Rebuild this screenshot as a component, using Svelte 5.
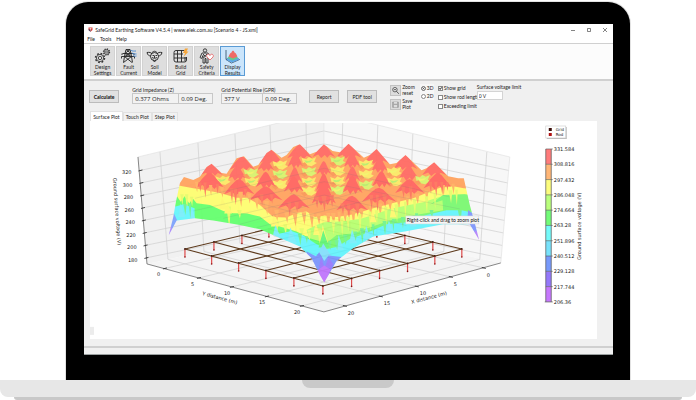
<script>
  const tools = [
    ['Design', 'Settings', 'gears'],
    ['Fault', 'Current', 'tower'],
    ['Soil', 'Model', 'soil'],
    ['Build', 'Grid', 'grid'],
    ['Safety', 'Criteria', 'safety'],
    ['Display', 'Results', 'results']
  ];
  let activeTool = $state('results');
  let activeTab = $state('Surface Plot');
  let view = $state('3D');

  const zTicks = [320, 300, 280, 260, 240, 220, 200, 180].map((value, i) => ({
    value,
    x: 140 + i * 0.85,
    y: 170.5 + i * 12.5,
    back: 131 + i * 12.9,
    right: 509 - i * 1.1
  }));

  // Floor grid lines: tick on the front edge, foot of the wall, top of the wall
  const xLines = [
    { label: 20, tick: [345, 306], foot: [168, 259.5], top: [160, 152] },
    { label: 15, tick: [381, 296.5], foot: [204, 251.5], top: [198, 143] },
    { label: 10, tick: [417, 286.5], foot: [240, 243.5], top: [235, 134] },
    { label: 5, tick: [451, 277], foot: [274, 236], top: [270, 125] },
    { label: 0, tick: [484, 268], foot: [308, 228.5], top: [306, 117] }
  ];
  const yLines = [
    { label: 0, tick: [165, 268.5], foot: [340, 228.5], top: [343, 117] },
    { label: 5, tick: [199, 278], foot: [374, 236], top: [378, 125] },
    { label: 10, tick: [232, 287], foot: [409, 243.5], top: [413, 134] },
    { label: 15, tick: [267, 296.5], foot: [444, 251.5], top: [449, 143] },
    { label: 20, tick: [302, 306], foot: [480, 259.5], top: [487, 152] }
  ];

  // Buried conductors run between matching nodes on opposite edges
  const frontLeft = [[185, 249], [211.7, 256], [238.7, 263], [266, 270.5], [294, 278], [323, 286]];
  const backRight = [[323, 216], [350, 222.5], [377, 229], [405, 235.5], [433, 242], [462, 249]];
  const frontRight = [[323, 286], [351.7, 278.5], [379.7, 270.5], [407.7, 263.5], [435, 256], [462, 249]];
  const backLeft = [[185, 249], [214, 242], [242, 235.5], [269, 229], [296, 222.5], [323, 216]];
  const rods = [...frontLeft, ...frontRight.slice(1), ...backLeft.slice(1), ...backRight.slice(1, 5)];

  const scale = [
    ['331.584', '#ff7b7b'], ['308.816', '#ffb676'], ['297.432', '#fcfc7c'], ['286.048', '#baff7c'],
    ['274.664', '#72fb78'], ['263.28', '#74fafa'], ['251.896', '#78e2fb'], ['240.512', '#7799fb'],
    ['229.128', '#9478fa'], ['217.744', '#c678fd']
  ];

  // Crests of the surface: apex x, apex y, half width, height
  const backCrests = [
    [155, 86, 34, 34], [247, 64, 38, 40], [333, 44, 38, 42], [420, 28, 38, 42], [492, 28, 34, 38],
    [567, 26, 38, 42], [650, 42, 36, 42], [737, 60, 36, 42], [823, 82, 36, 38],
    [232, 92, 30, 42], [318, 72, 26, 34], [407, 52, 24, 44], [492, 78, 22, 40], [577, 52, 25, 44],
    [660, 68, 26, 42], [747, 92, 32, 42], [405, 96, 22, 46], [578, 94, 23, 44]
  ];
  const frontCrests = [
    [492, 114, 24, 54], [665, 108, 28, 46], [318, 110, 30, 46], [150, 113, 44, 46], [238, 132, 46, 46],
    [402, 124, 30, 46], [578, 122, 30, 52], [750, 132, 44, 42], [835, 114, 44, 46],
    [492, 140, 36, 66], [318, 154, 50, 42], [402, 178, 48, 42], [577, 182, 48, 44], [658, 158, 52, 42]
  ];
  const crest = ([x, y, w, h]) =>
    `M${x - w} ${y + h}L${x - w * 0.55} ${y + h * 0.42}L${x - w * 0.2} ${y + h * 0.08}L${x} ${y}L${x + w * 0.22} ${y + h * 0.14}L${x + w * 0.6} ${y + h * 0.58}L${x + w} ${y + h}L${x + w * 0.55} ${y + h * 0.82}L${x + w * 0.3} ${y + h * 1.06}L${x + w * 0.08} ${y + h * 0.84}L${x - w * 0.24} ${y + h * 1.08}L${x - w * 0.5} ${y + h * 0.8}Z`;

  const hollows = [
    [190, 130], [275, 108], [278, 134], [362, 84], [362, 112], [362, 142], [449, 74], [449, 104],
    [449, 134], [449, 162], [535, 72], [535, 102], [535, 132], [535, 160], [620, 82], [620, 112],
    [620, 144], [704, 104], [706, 134], [790, 128]
  ];

  // Facets that cross a band edge: x, top, bottom, half width
  const spike = ([x, a, b, w]) => `M${x - w} ${a}L${x + w} ${a}L${x + w * 0.3} ${b}Z`;
  const rise = ([x, a, b, w]) => `M${x - w} ${b}L${x + w} ${b}L${x - w * 0.3} ${a}Z`;
  const redDown = [[120, 142, 170, 5], [135, 142, 188, 5], [172, 146, 176, 5], [215, 160, 202, 5], [226, 160, 210, 6], [256, 162, 186, 5], [305, 178, 212, 6], [335, 178, 206, 6], [388, 200, 244, 6], [410, 200, 232, 7], [470, 182, 220, 7], [492, 182, 230, 8], [515, 180, 216, 7], [548, 206, 240, 6], [566, 206, 256, 6], [592, 206, 246, 7], [634, 180, 224, 6], [652, 180, 232, 5], [674, 178, 218, 7], [730, 154, 190, 6], [752, 154, 200, 6], [812, 140, 176, 5], [828, 140, 184, 5], [846, 140, 180, 5], [862, 142, 168, 4]];
  const orangeDown = [[110, 140, 172, 5], [152, 150, 182, 5], [186, 155, 188, 6], [242, 170, 216, 7], [268, 176, 206, 6], [290, 190, 224, 6], [320, 198, 240, 7], [350, 225, 258, 7], [380, 232, 264, 7], [405, 232, 275, 8], [432, 232, 270, 7], [455, 234, 282, 7], [476, 236, 270, 7], [505, 234, 292, 6], [520, 234, 274, 7], [538, 230, 292, 5], [555, 228, 266, 7], [580, 226, 280, 6], [604, 222, 252, 7], [632, 210, 252, 6], [660, 206, 244, 7], [690, 196, 230, 7], [716, 190, 226, 6], [742, 184, 230, 5], [772, 176, 208, 7], [800, 166, 202, 6], [850, 150, 182, 6], [880, 146, 178, 5]];
  const yellowDown = [[66, 178, 212, 5], [80, 178, 225, 5], [95, 185, 215, 5], [206, 215, 280, 7], [238, 225, 250, 7], [350, 260, 290, 7], [376, 268, 300, 6], [425, 280, 310, 7], [448, 285, 322, 5], [478, 280, 330, 7], [520, 256, 300, 6], [546, 250, 305, 5], [564, 246, 290, 5], [600, 238, 300, 5], [630, 230, 290, 4], [650, 226, 268, 5], [678, 216, 280, 5], [710, 208, 262, 6], [736, 200, 250, 4], [764, 194, 240, 5], [800, 184, 235, 5], [825, 176, 222, 4], [872, 166, 205, 6], [890, 164, 210, 4]];
  const greenDown = [[75, 208, 240, 5], [90, 206, 252, 4], [420, 296, 332, 6], [440, 304, 326, 4], [510, 318, 345, 5], [530, 316, 345, 6], [556, 300, 330, 6], [586, 290, 318, 6], [606, 280, 325, 6], [640, 268, 305, 4], [674, 258, 300, 6], [700, 252, 290, 4], [728, 246, 280, 5], [770, 235, 262, 5], [815, 225, 250, 6], [900, 225, 262, 6]];
  const yellowUp = [[190, 186, 222, 12], [205, 206, 236, 12], [345, 240, 275, 12], [470, 262, 300, 10], [492, 270, 322, 12], [640, 220, 262, 10], [700, 206, 248, 10]];
  const cyanUp = [[65, 206, 246, 10], [98, 220, 252, 8], [350, 270, 306, 12], [396, 278, 326, 15], [540, 300, 345, 12], [580, 284, 325, 12], [622, 272, 312, 10], [690, 256, 290, 10], [760, 244, 275, 10]];
</script>

{#snippet icon(name)}
  <svg class="glyph" viewBox="0 0 32 32" aria-hidden="true">
    {#if name === 'gears'}
      <g fill="none" stroke="#333">
        <circle cx="11" cy="20" r="9" stroke-width="3" stroke-dasharray="3.5 3.57" />
        <circle cx="11" cy="20" r="7.2" stroke-width="1.7" />
        <circle cx="11" cy="20" r="3.4" stroke-width="1.7" />
        <circle cx="24" cy="8" r="6" stroke-width="2.6" stroke-dasharray="2.4 2.3" />
        <circle cx="24" cy="8" r="4.8" stroke-width="1.5" />
        <circle cx="24" cy="8" r="2" stroke-width="1.4" />
      </g>
    {:else if name === 'tower'}
      <path d="M11 3h8l2 8 3 18M11 3l-2 8-3 18M4 11h22M2 17h26M11 3l10 8M19 3L9 11M9 11l13 6M21 11L8 17M8 17l15 12M22 17L6 29M3 11v3M27 11v3M2 17v4M28 17v4" fill="none" stroke="#222" stroke-width="1.8" />
      <path d="M20 4c4 3 7 2 11 2M23 10c3 2 5 2 9 2M25 15c2 1 4 2 7 1" fill="none" stroke="#3f83d0" stroke-width="1.8" />
    {:else if name === 'soil'}
      <g fill="none" stroke="#2a2a2a" stroke-width="1.9">
        <circle cx="16" cy="17" r="8" />
        <path d="M1 9c5-1 8 0 10 3M31 9c-5-1-8 0-10 3M1 9c1 5 4 7 8 7M31 9c-1 5-4 7-8 7M10 11c3-6 9-6 12 0M11 19c3 2 7 2 10 0M13 24l3 4 3-4" />
        <path d="M12 15h3M18 15h3M16 15v5" />
      </g>
    {:else if name === 'grid'}
      <path d="M7 5h17M7 5q-4 0-4 4v15q0 4 4 4h17q4 0 4-4V18M3 12h18M3 20h25M10 5v23M18 5v23M25 18v9" fill="none" stroke="#2a2a2a" stroke-width="1.9" />
      <path d="M25 1h6l-3 6h4L22 18l3-8h-4z" fill="#f6a63a" />
    {:else if name === 'safety'}
      <g fill="none" stroke="#2a2a2a" stroke-width="1.8">
        <circle cx="13" cy="5" r="3.4" />
        <path d="M7 10h12l3 5M7 10l-4 9 3 2 3-6v15h4v-9h2v9h4V19M9 12l5 5M17 12l-7 8" />
      </g>
      <path d="M23 24l-6-6c-3-5 4-8 6-3 2-5 9-2 6 3z" fill="#fff" stroke="#e4696c" stroke-width="1.8" />
    {:else}
      <path d="M3 4v19l11 7 16-7M3 23l14-6 13 6" fill="none" stroke="#2c4660" stroke-width="1.6" />
      <path d="M4 24c3-4 5-8 9-8h8c4 1 6 4 9 7l-15 6z" fill="#5ea8e8" />
      <path d="M6 20c4-4 5-7 10-7s8 4 11 7l-11 5z" fill="#66c98d" />
      <path d="M8 17c2-3 3-8 6-8 1-5 5-5 6 0 3 0 4 5 6 8l-9 4z" fill="#ee6a66" />
    {/if}
  </svg>
{/snippet}

<main>
  <div class="lid">
    <div class="window">
      <header class="title">
        <svg class="logo" viewBox="0 0 10 10" aria-hidden="true">
          <path d="M1 1h8v5L5 9.500 1 6z" fill="#d8433f" /><path d="M1 5h4v4.500L1 6z" fill="#3c4a66" /><path d="M3 3h4M5 2v5" stroke="#fff" />
        </svg>
        <span class="caption">SafeGrid Earthing Software V4.5.4 | www.elek.com.au [Scenario 4 - JS.xml]</span>
        <span class="winbtns">
          <button aria-label="Minimise"><svg viewBox="0 0 6 6"><path d="M1 3.500h4" /></svg></button>
          <button aria-label="Maximise"><svg viewBox="0 0 6 6"><path d="M1.500 1.500h3v3h-3z" /></svg></button>
          <button aria-label="Close"><svg viewBox="0 0 6 6"><path d="M1 1l4 4M5 1L1 5" /></svg></button>
        </span>
      </header>

      <nav class="menu">
        <button>File</button><button>Tools</button><button>Help</button>
      </nav>

      <div class="toolbar">
        {#each tools as [first, second, name]}
          <button class="tool" class:active={activeTool === name} onclick={() => (activeTool = name)}>
            {@render icon(name)}
            <span>{first}<br />{second}</span>
          </button>
        {/each}
      </div>

      <section class="controls">
        <button class="push strong">Calculate</button>
        <div class="reading impedance">
          <label for="z">Grid Impedance (Z)</label>
          <div class="pair">
            <input id="z" readonly value="0.377 Ohms" />
            <input class="angle" aria-label="Impedance angle" readonly value="0.09 Deg." />
          </div>
        </div>
        <div class="reading gpr">
          <label for="gpr">Grid Potential Rise (GPR)</label>
          <div class="pair">
            <input id="gpr" readonly value="377 V" />
            <input class="angle" aria-label="Potential rise angle" readonly value="0.09 Deg." />
          </div>
        </div>
        <button class="push report">Report</button>
        <button class="push">PDF tool</button>
        <div class="actions">
          <button>
            <svg viewBox="0 0 11 11"><circle cx="4.800" cy="4.500" r="2.700" fill="#eee" stroke="#444" /><path d="M6.800 6.500l2.700 3M3.500 4.500h2.600" stroke="#333" /></svg>
            <span>Zoom<br />reset</span>
          </button>
          <button>
            <svg viewBox="0 0 11 11"><path d="M2 2.500h7v6.500H2z" fill="#aaa" stroke="#888" stroke-width=".6" /><path d="M3.500 2.500h4v2h-4zM3.500 6h4v3h-4z" fill="#ddd" /></svg>
            <span>Save<br />Plot</span>
          </button>
        </div>
        <div class="views">
          <label><input type="radio" name="view" value="3D" bind:group={view} />3D</label>
          <label><input type="radio" name="view" value="2D" bind:group={view} />2D</label>
        </div>
        <div class="checks">
          <label><input type="checkbox" checked />Show grid</label>
          <label><input type="checkbox" />Show rod length</label>
          <label><input type="checkbox" />Exceeding limit</label>
        </div>
        <div class="limit">
          <label for="limit">Surface voltage limit</label>
          <input id="limit" value="0 V" />
        </div>
      </section>

      <div class="tabs" role="tablist">
        {#each ['Surface Plot', 'Touch Plot', 'Step Plot'] as tab}
          <button role="tab" aria-selected={activeTab === tab} onclick={() => (activeTab = tab)}>{tab}</button>
        {/each}
      </div>

      <div class="panel">
        <svg class="plot" viewBox="90 121 507 218" role="img" aria-label="Ground surface voltage over the grid">
          <defs>
            <clipPath id="area"><rect x="90" y="123" width="507" height="216" /></clipPath>
            <clipPath id="sheet">
              <path d="M26 302L40 246L48 200L60 144L72 126L100 135L120 125L140 96L155 86L185 114L200 116L230 70L252 64L280 95L295 90L320 54L335 44L365 68L380 60L400 36L420 28L450 58L470 50L492 28L518 48L540 52L566 26L612 68L630 60L650 42L690 88L710 84L737 60L785 106L800 100L823 82L865 124L895 130L912 130L930 210L945 265L958 315L930 268L850 268L735 290L640 305L580 340L530 378L493 443L480 420L455 370L420 335L350 305L300 283L240 270L160 257L105 250L50 257Z" />
            </clipPath>
          </defs>

          <g clip-path="url(#area)">
            <path d="M138 157L324 112V225L147 264Z" fill="#f1f1f1" />
            <path d="M510 157L324 112V225L501 263Z" fill="#f7f7f7" />
            <path d="M147 264L324 225L501 263L324 312Z" fill="#f4f4f4" />
            <g fill="none" stroke="#cfcfcf" stroke-width=".7">
              {#each [...xLines, ...yLines] as l}
                <path d="M{l.tick}L{l.foot}L{l.top}" />
              {/each}
              {#each zTicks as t}
                <path d="M{t.x} {t.y}L324 {t.back}L{t.right} {t.y}" />
              {/each}
              <path d="M138 157L324 112L510 157L501 263M324 112V225" stroke="#e2e2e2" />
            </g>
          </g>

          <path d="M138 157L147 264L324 312L501 263" fill="none" stroke="#555" stroke-width=".7" />
          <g stroke="#333" stroke-width=".9">
            {#each zTicks as t}<path d="M{t.x - 1.5} {t.y + 0.5}l4-1" />{/each}
            {#each xLines as l}<path d="M{l.tick[0] - 2} {l.tick[1] - 0.5}l4 1" />{/each}
            {#each yLines as l}<path d="M{l.tick[0] - 2} {l.tick[1] + 0.5}l4-1" />{/each}
          </g>

          <g stroke="#5d3a1c" stroke-width="1.1">
            {#each frontLeft as p, i}<path d="M{p}L{backRight[i]}" />{/each}
            {#each frontRight as p, i}<path d="M{p}L{backLeft[i]}" />{/each}
          </g>
          {#each rods as [x, y]}
            <path d="M{x} {y}v8" stroke="#dd4a4a" stroke-width="1.200" />
            <circle cx={x} cy={y} r=".9" fill="#3a1c10" />
            <circle cx={x} cy={y + 8} r=".8" fill="#8a1414" />
          {/each}

          <g transform="translate(160 135) scale(.33333)">
            <g clip-path="url(#sheet)" opacity=".96">
              <path d="M20 20H970V450H20Z" fill="#ffa460" />
              {#each backCrests as c}<path d={crest(c)} fill="#ff6c64" />{/each}
              {#each hollows as [x, y], i}
                <path d="M{x - 24} {y - 6}l14 5 8-7 10 5 12-5-6 14 8 4-16 10-14-3-9 4z" fill={i % 3 === 1 ? '#d9f26e' : '#fbe968'} />
                <path d="M{x - 16} {y + 2}l12 2 14-4-8 8-12 2z" fill={i % 2 ? '#f2f56c' : '#b9ee6e'} />
                <path d="M{x - 26} {y + 12}l12-4 8 9-10 6z" fill="#f99a58" />
              {/each}
              {#each frontCrests as c}<path d={crest(c)} fill="#ff6660" />{/each}
              <path d="M20 158L60 152L100 160L130 164L180 174L230 188L262 188L300 210L340 246L380 248L410 234L440 230L465 246L493 242L530 246L570 240L600 232L640 220L700 204L760 190L800 174L840 158L880 154L912 160L970 164V450H20Z" fill="#fdfd72" />
              {#each orangeDown as s}<path d={spike(s)} fill="#ffb062" />{/each}
              {#each redDown as s}<path d={spike(s)} fill="#fd765e" />{/each}
              <path d="M440 285L470 270L493 262L540 260L600 252L640 240L690 222L740 212L790 202L850 182L912 178L970 180V450H493Z" fill="#b9ff72" />
              <path d="M20 184L50 182L62 200L74 184L88 206L98 190L110 205L150 210L190 228L220 235L262 236L300 245L330 268L370 278L410 290L450 310L490 322L520 330V450H20Z" fill="#66ff70" />
              <path d="M493 330L530 300L580 292L640 270L700 250L780 232L850 180L915 178L970 190V450H493Z" fill="#7cf873" />
              <path d="M520 300L580 268L640 256L720 232L800 212L848 196L850 226L780 238L700 254L640 274L580 296Z" fill="#b9ff72" />
              {#each yellowDown as s}<path d={spike(s)} fill="#e6fb6c" />{/each}
              {#each yellowUp as s}<path d={rise(s)} fill="#fdf870" />{/each}
              <path d="M20 218L50 214L70 208L104 220V260H20Z" fill="#68f6fb" />
              <path d="M350 298L395 288L430 302L470 328L500 342L530 336L570 312L620 294L680 268L740 262L800 240L860 226L905 226L970 240V450H350Z" fill="#68f4fc" />
              {#each cyanUp as s}<path d={rise(s)} fill="#7beefa" />{/each}
              {#each greenDown as s}<path d={spike(s)} fill="#73f391" />{/each}
              <path d="M476 338L490 286L508 338Z" fill="#66f77c" />
              <path d="M462 385L490 326L528 385Z" fill="#86dffb" />
              <path d="M10 275L42 236L54 262L30 320Z" fill="#7fa4fb" />
              <path d="M10 310L34 270L38 290L26 320Z" fill="#ab8cfb" />
              <path d="M925 225L970 260V340L950 310L922 262Z" fill="#8098fb" />
              <path d="M944 286L970 300V340H950Z" fill="#b585fb" />
              <path d="M440 350L468 364L478 352L493 378L506 362L545 366V450H440Z" fill="#7d97fc" />
              <path d="M478 395L484 364L494 400L506 366L520 388L493 450Z" fill="#9b7bfb" />
              <path d="M470 408L493 392L512 404L493 450Z" fill="#c077fc" />
              <g fill="none" stroke="#667" stroke-opacity=".2" stroke-width="2">
                <path d="M105 190L493 100L870 186M100 228L493 140L900 222M190 250L493 180L850 262M240 268L600 170M740 272L390 175M290 278L680 182M650 300L300 205" />
              </g>
            </g>
          </g>

          <g class="axis">
            {#each zTicks as t}<text x={t.x - 18} y={t.y + 4}>{t.value}</text>{/each}
            {#each xLines as l}<text x={l.tick[0] + 3} y={l.tick[1] + 9}>{l.label}</text>{/each}
            {#each yLines as l}<text x={l.tick[0] - 8} y={l.tick[1] + 8}>{l.label}</text>{/each}
            <text transform="translate(113 178) rotate(86)">Ground surface voltage (V)</text>
            <text transform="translate(202 295) rotate(15)">Y distance (m)</text>
            <text transform="translate(412 304) rotate(-15)">X distance (m)</text>
            <text transform="translate(581 260) rotate(-90)">Ground surface voltage (V)</text>
          </g>

          <rect x="547" y="127" width="20" height="12" fill="#bbb" />
          <rect x="546" y="126" width="20" height="12" fill="#fff" stroke="#ccc" stroke-width=".6" />
          <rect x="549" y="128" width="3" height="3" fill="#3a0d08" />
          <rect x="549" y="133" width="3" height="3" fill="#b01212" />
          <g class="key"><text x="556" y="131">Grid</text><text x="556" y="136">Rod</text></g>

          {#each scale as [value, color], i}
            <rect x="546" y={149 + i * 15.3} width="5.500" height="15.300" fill={color} />
            <path d="M546 {149 + i * 15.3}h7" stroke="#555" stroke-width=".6" />
            <text class="axis" x="554" y={151 + i * 15.3}>{value}</text>
          {/each}
          <path d="M545 302h8M546 149v153M551.500 149v153" stroke="#555" stroke-width=".7" />
          <text class="axis" x="554" y="304">206.36</text>

          <rect x="406" y="216" width="73" height="8" fill="#f6f6f6" stroke="#cfd4d8" stroke-width=".5" />
          <text class="tip" x="407" y="222">Right-click and drag to zoom plot</text>
          <rect x="90" y="327" width="4" height="8" fill="#ececec" />
        </svg>
      </div>

      <footer></footer>
    </div>
  </div>
  <div class="base"><div class="notch"></div></div>
  <div class="foot"></div>
</main>

<style>
  :global(body) { margin: 0; background: #fff; }
  main { padding-top: 2px; font-family: Lato, "Open Sans", sans-serif; font-size: 5px; line-height: 6px; color: #222; }
  button, input { font: inherit; color: inherit; margin: 0; padding: 0; border: 0; background: none; border-radius: 0; box-sizing: border-box; }
  .lid { box-sizing: border-box; width: 81%; margin: 0 auto; padding: 22px 17px 25px 18px; background: #000; border-radius: 22px 22px 0 0; box-shadow: 0 0 0 1px #e2e2e2; }
  .window { background: #f0f0f0; }
  .title { display: flex; align-items: center; height: 11px; padding-left: 4px; background: #fff; }
  .logo { width: 5px; height: 5px; margin-right: 2px; }
  .caption { flex: 1; white-space: nowrap; }
  .winbtns { display: flex; gap: 10px; padding-right: 5px; }
  .winbtns button { display: flex; }
  .winbtns svg { width: 6px; height: 6px; fill: none; stroke: #333; stroke-width: .6; }
  .menu { display: flex; gap: 5px; height: 8px; padding-left: 3px; background: #fff; border-bottom: 1px solid #d0d0d0; }
  .toolbar { display: flex; gap: 1px; box-sizing: border-box; height: 37px; padding: 2px 6px; background: #fcfcfc; border-bottom: 2px solid #d0d0d0; }
  .tool { display: flex; flex-direction: column; align-items: center; width: 25px; height: 30px; padding-top: 1px; background: #dedede; border: 1px solid #d2d2d2; text-align: center; }
  .tool.active { background: #cbe5fb; border-color: #5a9bd5; }
  .glyph { flex: none; width: 17px; height: 16px; }
  .controls { display: flex; align-items: flex-start; box-sizing: border-box; height: 29px; padding: 3px 0 0 5px; white-space: nowrap; }
  .push { width: 30px; height: 13px; margin-top: 6px; background: #e1e1e1; border: 1px solid #bcbcbc; }
  .strong { font-weight: 900; }
  .reading { display: flex; flex-direction: column; margin-top: 3px; }
  .impedance { width: 81px; margin-left: 13px; }
  .gpr { width: 76px; margin-left: 8px; }
  .pair { display: flex; }
  .pair input { flex: 1; min-width: 0; height: 11px; padding-left: 2px; background: #f2f2f2; border: 1px solid #c8c8c8; font: 6px "Open Sans", sans-serif; }
  .pair .angle { flex: none; width: 34px; border-left: 0; }
  .report { margin: 6px 8px 0 12px; }
  .actions { display: flex; flex-direction: column; gap: 2px; margin-left: 13px; }
  .actions button { display: flex; align-items: center; gap: 1px; height: 12px; text-align: left; }
  .actions svg { width: 9px; height: 9px; background: #dcdcdc; border: 1px solid #c2c2c2; }
  .views { display: flex; flex-direction: column; gap: 2px; width: 13px; margin-left: 5px; padding: 1px 0 1px 1px; background: #f7f7f7; }
  label { white-space: nowrap; }
  .views label, .checks label { display: flex; align-items: center; gap: 1px; }
  input[type="radio"], input[type="checkbox"] { appearance: none; flex: none; display: grid; place-items: center; width: 5px; height: 5px; background: #fff; border: 1px solid #888; }
  input[type="radio"] { border-radius: 50%; }
  input[type="radio"]:checked { background: #222; box-shadow: inset 0 0 0 1px #fff; }
  input[type="checkbox"]:checked::after { content: ""; width: 2px; height: 1px; border: solid #555; border-width: 0 0 1px 1px; transform: rotate(-45deg); }
  .checks { display: flex; flex-direction: column; gap: 3px; width: 39px; margin: 1px 0 0 4px; }
  .limit { position: relative; display: flex; flex-direction: column; gap: 1px; }
  .limit input { width: 26px; height: 9px; padding-left: 1px; background: #fff; border: 1px solid #d4d4d4; }
  .tabs { display: flex; align-items: flex-end; height: 11px; padding-left: 6px; }
  .tabs button { height: 9px; padding: 0 2px; background: #f2f2f2; border: 1px solid #e2e2e2; border-bottom: 0; }
  .tabs button[aria-selected="true"] { height: 10px; background: #fff; }
  .panel { margin: 0 16px 7px 6px; background: #fff; }
  .plot { display: block; width: 100%; height: auto; }
  .axis { font-family: "DejaVu Sans", sans-serif; font-size: 5px; fill: #222; }
  .key { font-family: "DejaVu Sans", sans-serif; font-size: 4px; fill: #222; }
  .tip { font-family: Lato, sans-serif; font-size: 5px; fill: #111; }
  footer { box-sizing: border-box; height: 9px; border-top: 2px solid #d0d0d0; border-bottom: 1px solid #9a9f9f; }
  .base { display: flex; justify-content: center; height: 17px; background: #e7e7e7; border-radius: 0 0 8px 8px; }
  .notch { width: 92px; height: 8px; background: #c9c9c9; border-radius: 0 0 8px 8px; }
  .foot { height: 3px; margin: 0 14px; background: #c8c8c8; border-radius: 0 0 3px 3px; }
</style>
